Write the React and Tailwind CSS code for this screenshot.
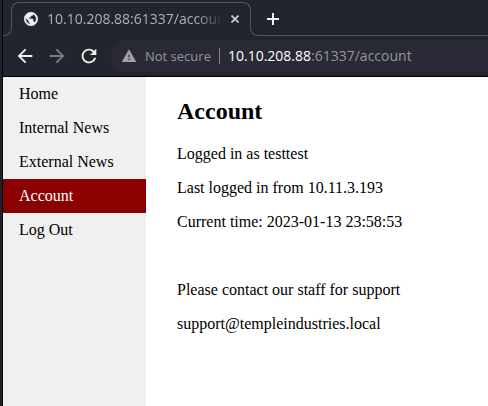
import React from "react";
import { MdArrowBack, MdArrowForward, MdRefresh, MdWarning } from "react-icons/md";

const navItems = ["Home", "Internal News", "External News", "Account", "Log Out"];

function GlobeIcon() {
  return (
    <svg className="size-4 shrink-0" viewBox="0 0 24 24" fill="#f1f1f1" stroke="#f1f1f1" strokeWidth="1" aria-hidden="true">
      <path d="M12 2C6.480 2 2 6.480 2 12s4.480 10 10 10 10-4.480 10-10S17.520 2 12 2zm-1 17.930c-3.950-.490-7-3.850-7-7.930 0-.620.080-1.210.210-1.790L9 15v1c0 1.100.9 2 2 2v1.930zm6.900-2.540c-.260-.810-1-1.390-1.900-1.390h-1v-3c0-.550-.450-1-1-1H8v-2h2c.550 0 1-.450 1-1V7h2c1.100 0 2-.9 2-2v-.410c2.930 1.190 5 4.060 5 7.410 0 2.080-.8 3.970-2.100 5.390z" />
    </svg>
  );
}

function TabStrip() {
  return (
    <div className="flex h-9 bg-[#23252e]">
      <div className="h-[9px] w-[9px] shrink-0 self-end rounded-br-[8px] border-r border-b border-[#55575e]" />
      <div className="-ml-px mt-[2px] flex h-[25px] w-60 shrink-0 items-center rounded-t-[8px] border border-b-0 border-[#55575e] pt-[8px] pr-[7px] pl-[11px]">
        <GlobeIcon />
        <span className="ml-2 min-w-0 flex-1 overflow-hidden bg-linear-to-r from-[#b5b6b9] from-85% to-transparent bg-clip-text text-[14px] leading-5 whitespace-nowrap text-transparent">
          10.10.208.88:61337/account
        </span>
        <button type="button" aria-label="Close tab" className="ml-1 flex size-4 shrink-0 items-center justify-center text-[#d0d1d3]">
          <svg className="size-2" viewBox="0 0 8 8" stroke="currentColor" strokeWidth="1.600" aria-hidden="true">
            <path d="M.5.5 7.500 7.500M7.500.5.5 7.500" />
          </svg>
        </button>
      </div>
      <div className="-ml-px h-[9px] w-[9px] shrink-0 self-end rounded-bl-[8px] border-b border-l border-[#55575e]" />
      <div className="flex-1 border-b border-[#55575e] pt-[11px] pl-[6px]">
        <button type="button" aria-label="New tab" className="flex size-4 items-center justify-center text-[#f1f1f1]">
          <svg className="size-3" viewBox="0 0 12 12" stroke="currentColor" strokeWidth="2" aria-hidden="true">
            <path d="M6 0V12M0 6H12" />
          </svg>
        </button>
      </div>
    </div>
  );
}

function Toolbar() {
  return (
    <div className="flex h-[41px] border-b border-black bg-[#23252e] pt-1 pb-1 pl-[11px]">
      <div className="flex shrink-0 items-center gap-[10px] pr-[11px]">
        <button type="button" aria-label="Back" className="text-[#f1f1f1]"><MdArrowBack className="size-[22px]" /></button>
        <button type="button" aria-label="Forward" className="text-[#7b7d82]"><MdArrowForward className="size-[22px]" /></button>
        <button type="button" aria-label="Reload" className="text-[#f1f1f1]"><MdRefresh className="size-[22px]" /></button>
      </div>
      <div className="flex h-8 min-w-0 flex-1 items-center rounded-l-full bg-[#292a35] pl-[10px] text-[14px] leading-5">
        <button type="button" className="flex shrink-0 items-center gap-2 text-[13px] text-[#94969c]">
          <MdWarning className="size-4 text-[#a0a2a8]" aria-hidden="true" />
          Not secure
        </button>
        <span className="mx-2 h-4 w-px shrink-0 bg-[#85878d]" />
        <label htmlFor="address" className="text-white">10.10.208.88</label>
        <input
          id="address"
          type="text"
          defaultValue=":61337/account"
          className="min-w-0 flex-1 bg-transparent text-[#94969c] outline-none"
        />
      </div>
    </div>
  );
}

export default function App() {
  return (
    <div className="flex min-h-screen flex-col border-l-2 border-[#1e202a] bg-white">
      <div className="flex flex-1 flex-col border-l border-black">
        <header className="font-['Open_Sans',sans-serif]">
          <TabStrip />
          <Toolbar />
        </header>
        <div className="flex flex-1 font-['Liberation_Serif',serif] text-[16px] leading-[18px] text-black">
          <nav className="w-[143px] shrink-0 bg-[#f0f0f0]">
            <ul>
              {navItems.map((item) => (
                <li key={item}>
                  <a
                    href="#"
                    aria-current={item === "Account" ? "page" : undefined}
                    className={
                      item === "Account"
                        ? "block bg-[#8b0000] px-4 py-2 text-white"
                        : "block px-4 py-2"
                    }
                  >
                    {item}
                  </a>
                </li>
              ))}
            </ul>
          </nav>
          <main className="flex-1 pt-5 pl-[31px]">
            <h2 className="mb-5 text-[24px] leading-7 font-bold">Account</h2>
            <p className="mb-4">Logged in as testtest</p>
            <p className="mb-4">Last logged in from 10.11.3.193</p>
            <p className="mb-[50px]">Current time: 2023-01-13 23:58:53</p>
            <p className="mb-4">Please contact our staff for support</p>
            <p>support@templeindustries.local</p>
          </main>
        </div>
      </div>
    </div>
  );
}
